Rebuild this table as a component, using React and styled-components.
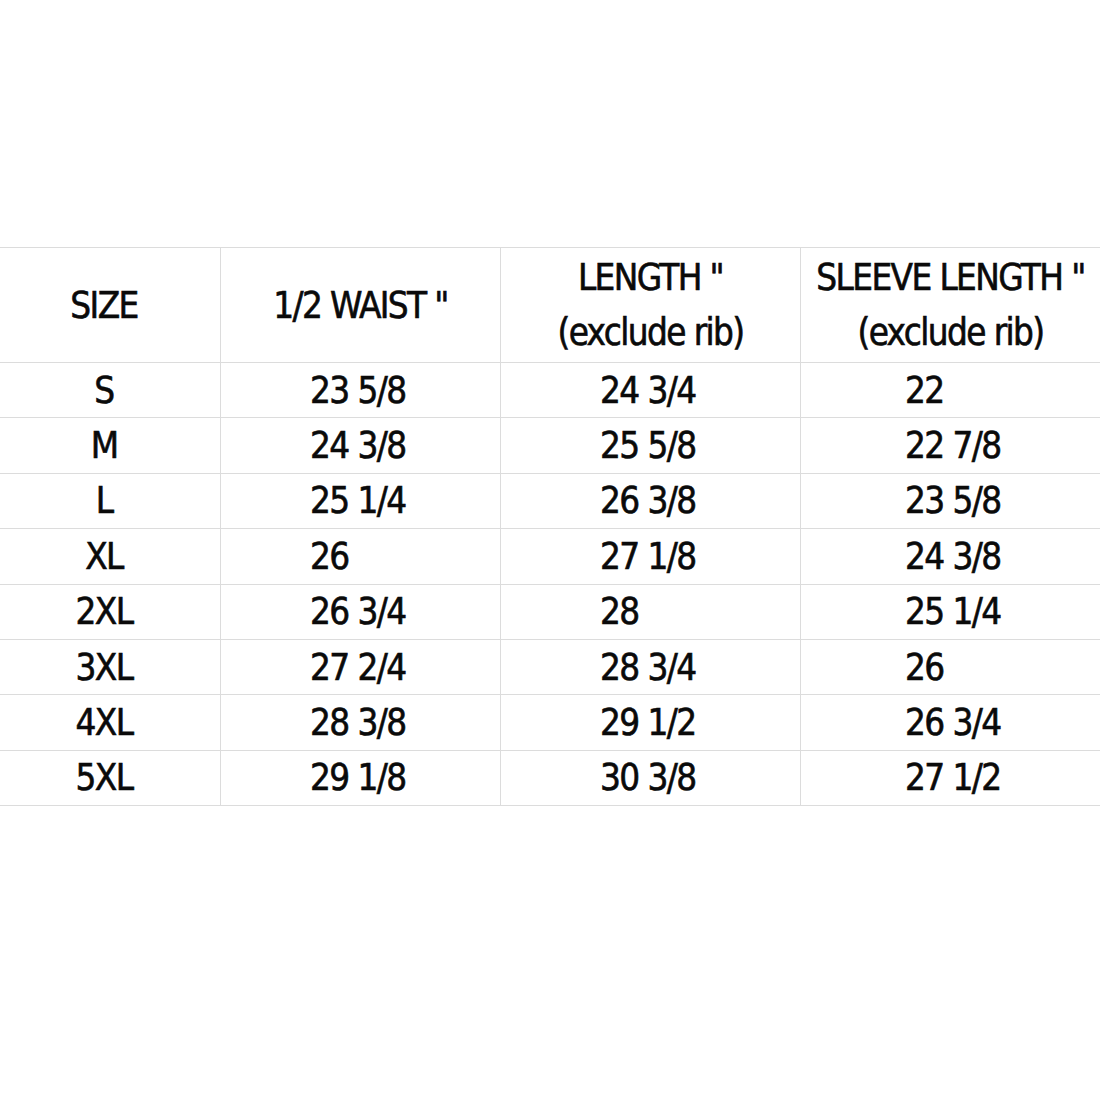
import React from 'react';
import styled, { createGlobalStyle } from 'styled-components';

const GlobalStyle = createGlobalStyle`
  html, body {
    margin: 0;
    padding: 0;
    background: #ffffff;
  }
`;

const Page = styled.div`
  width: 1100px;
  height: 1100px;
  padding-top: 247px;
  box-sizing: border-box;
  background: #ffffff;
  font-family: "DejaVu Sans Condensed", "DejaVu Sans", sans-serif;
  font-stretch: condensed;
  color: #0a0a0a;
`;

const Grid = styled.div`
  display: grid;
  grid-template-columns: 220px 280px 300px 300px;
  border-top: 1px solid #dcdcdc;
`;

const Cell = styled.div`
  box-sizing: border-box;
  height: ${props => (props.head ? '115px' : '55.4px')};
  border-bottom: 1px solid #dcdcdc;
  border-left: ${props => (props.first ? 'none' : '1px solid #dcdcdc')};
  display: flex;
  flex-direction: column;
  justify-content: center;
  align-items: ${props => (props.pad ? 'flex-start' : 'center')};
  padding-left: ${props => props.pad || 0}px;
  padding-right: ${props => (props.shift ? props.shift : 0)}px;
  font-size: 36.5px;
  letter-spacing: -1.6px;
  -webkit-text-stroke: 0.6px #0a0a0a;
  line-height: 55px;
  white-space: nowrap;
`;

const HeadLine = styled.span`
  display: block;
  text-align: center;
`;

const headers = [
  ['SIZE'],
  ['1/2 WAIST "'],
  ['LENGTH "', '(exclude rib)'],
  ['SLEEVE LENGTH "', '(exclude rib)']
];

const rows = [
  ['S', '23 5/8', '24 3/4', '22'],
  ['M', '24 3/8', '25 5/8', '22 7/8'],
  ['L', '25 1/4', '26 3/8', '23 5/8'],
  ['XL', '26', '27 1/8', '24 3/8'],
  ['2XL', '26 3/4', '28', '25 1/4'],
  ['3XL', '27 2/4', '28 3/4', '26'],
  ['4XL', '28 3/8', '29 1/2', '26 3/4'],
  ['5XL', '29 1/8', '30 3/8', '27 1/2']
];

// left offsets of the value text inside each column
const valuePad = [0, 89, 99, 104];

export default function App() {
  return (
    <Page>
      <GlobalStyle />
      <Grid>
        {headers.map((lines, i) => (
          <Cell key={'h' + i} head first={i === 0} shift={i === 0 ? 12 : 0}>
            {lines.map(line => (
              <HeadLine key={line}>{line}</HeadLine>
            ))}
          </Cell>
        ))}
        {rows.map(row =>
          row.map((value, i) => (
            <Cell
              key={row[0] + i}
              first={i === 0}
              pad={valuePad[i]}
              shift={i === 0 ? 12 : 0}
            >
              {value}
            </Cell>
          ))
        )}
      </Grid>
    </Page>
  );
}
